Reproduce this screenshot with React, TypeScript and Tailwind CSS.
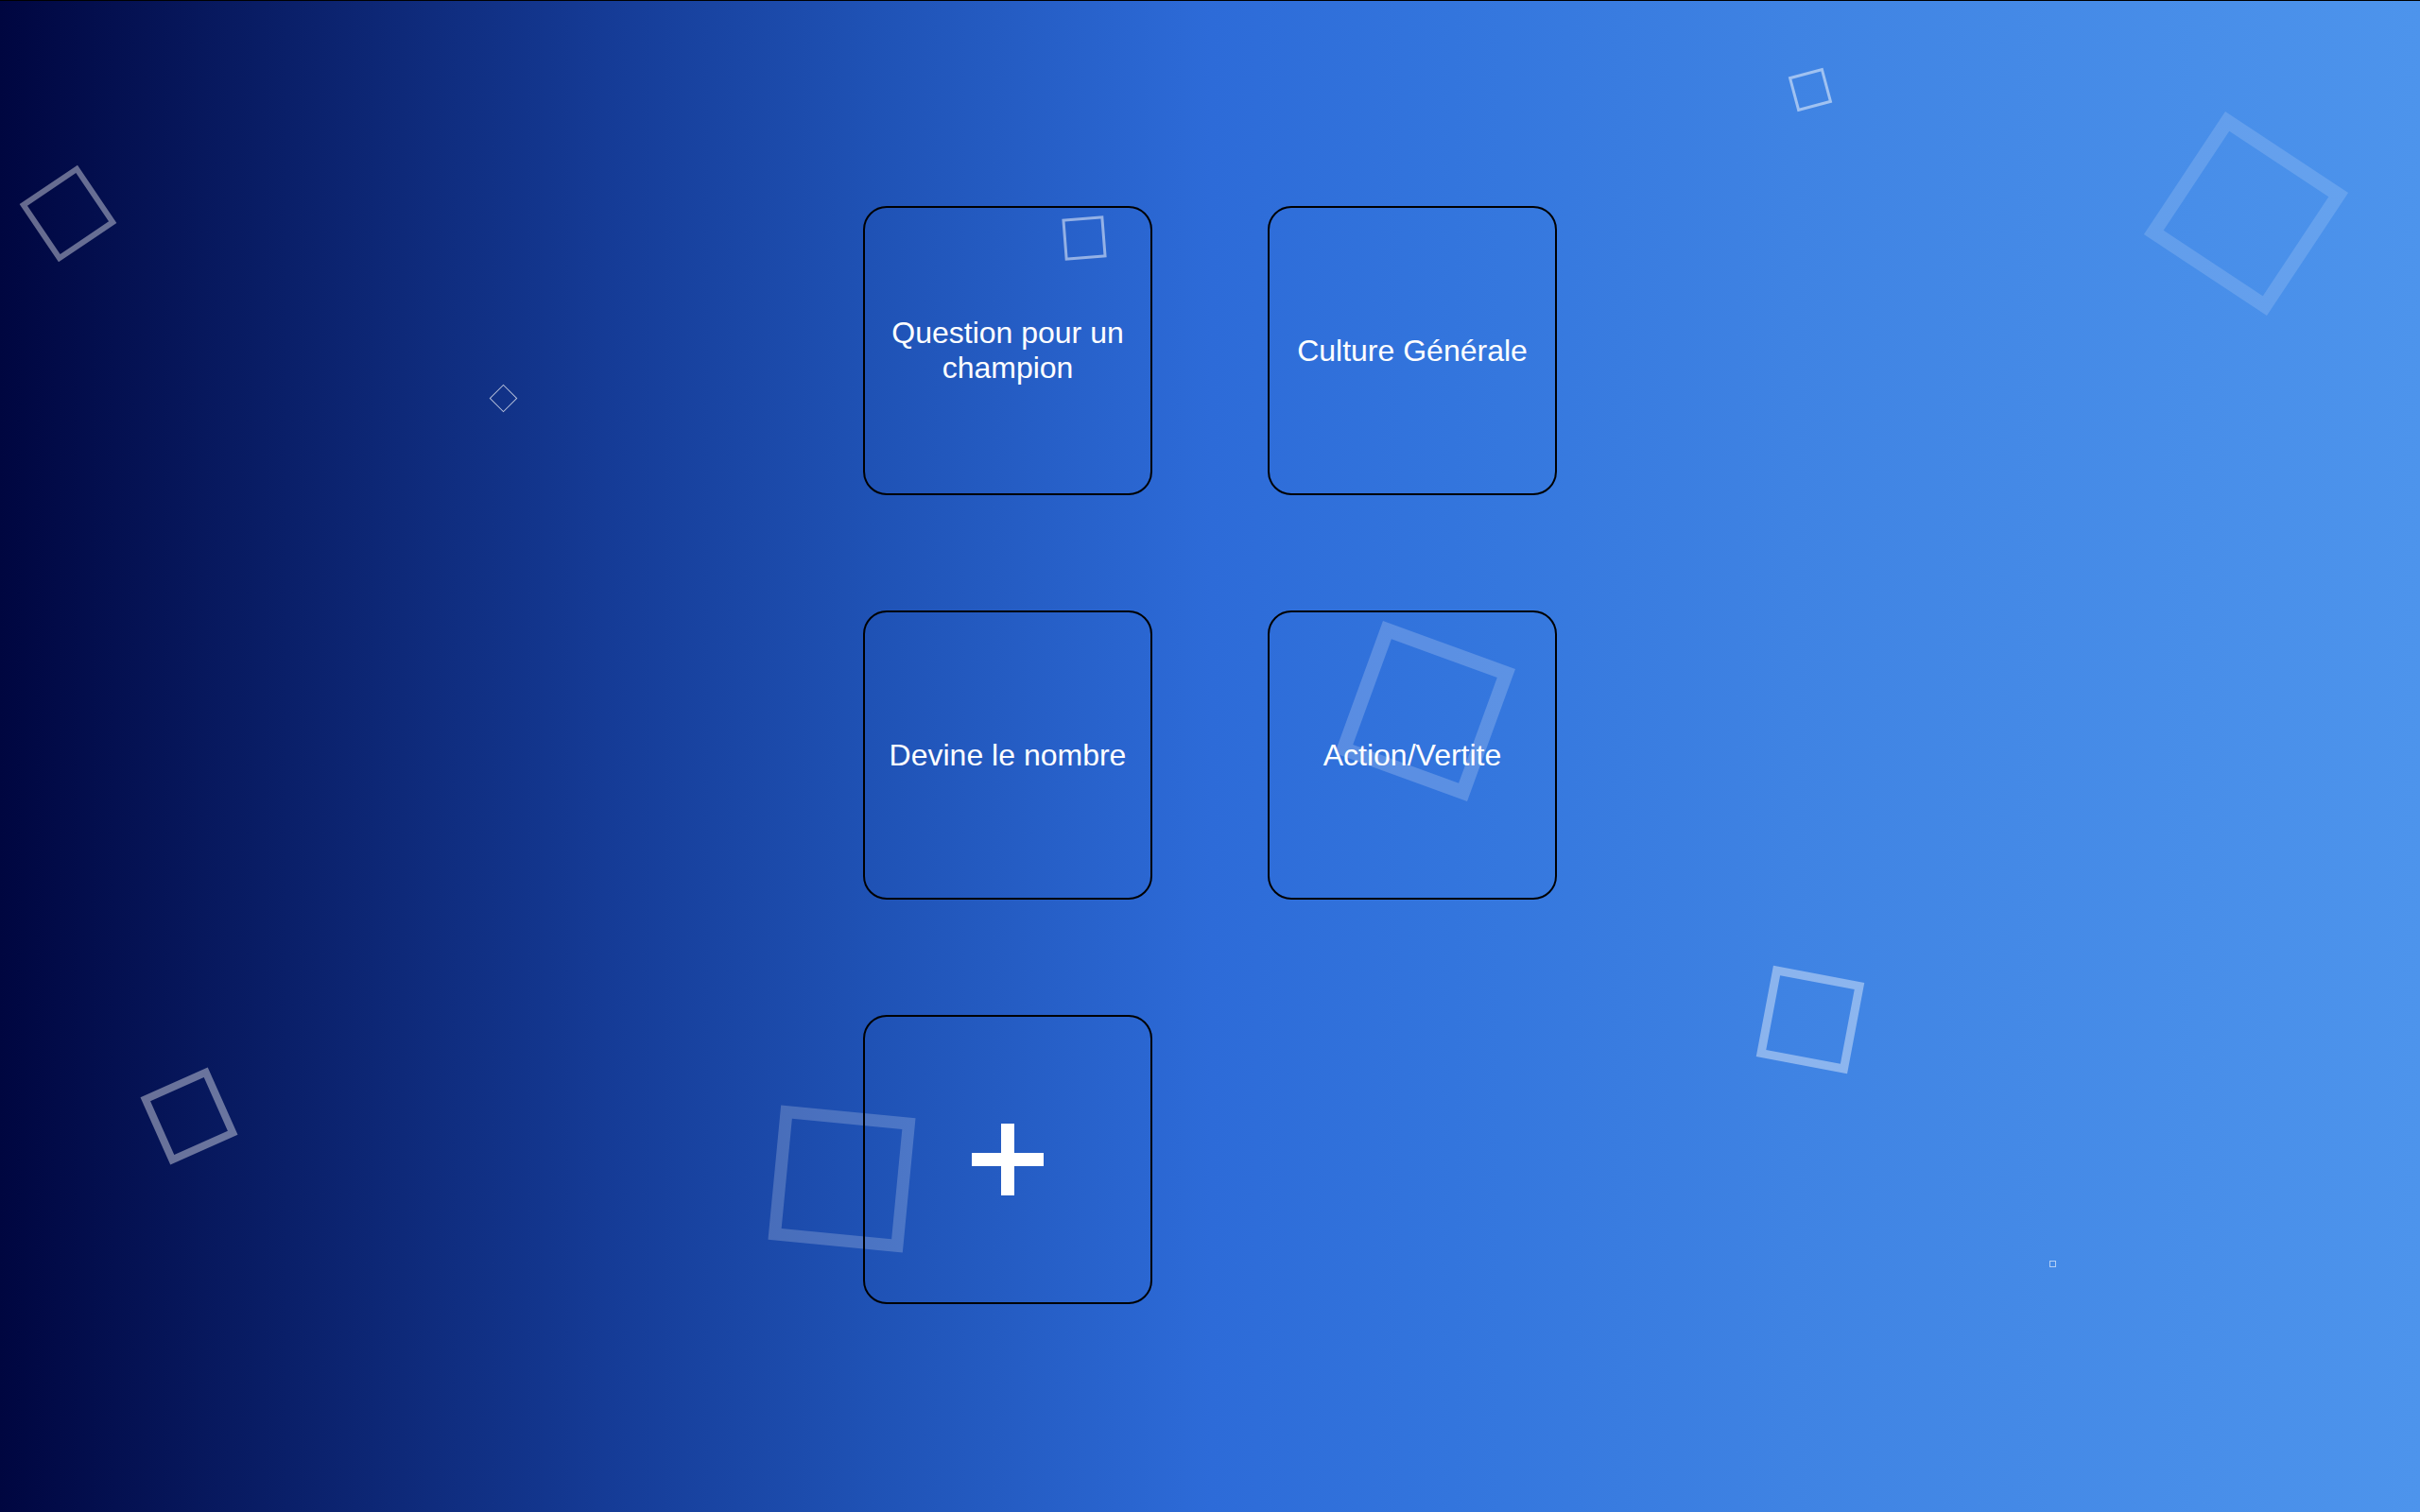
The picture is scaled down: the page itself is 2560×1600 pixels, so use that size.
import React from "react";

const cards = ["Question pour un champion", "Culture Générale", "Devine le nombre", "Action/Vertite"];

export default function App() {
  return (
    <div
      className="relative w-full h-[1600px] overflow-hidden border-t border-black bg-[linear-gradient(to_right,#000640_0%,#153b96_25%,#1f52b5_36%,#2d6bd8_50%,#3375dd_60%,#3f83e3_74%,#4d94ec_100%)]"
      style={{ fontFamily: '"Liberation Sans", Arial, sans-serif' }}
    >
      {/* decorative floating squares on the background canvas */}
      <div className="absolute left-[35px] top-[188px] w-[74px] h-[74px] rotate-[-34deg] border-[6px] border-white/40" />
      <div className="absolute left-[522px] top-[410px] w-[21px] h-[21px] rotate-[45deg] border-[1.5px] border-white/70" />
      <div className="absolute left-[161px] top-[1141px] w-[78px] h-[78px] rotate-[-24deg] border-[8px] border-white/40" />
      <div className="absolute left-[819px] top-[1175px] w-[143px] h-[143px] rotate-[5.5deg] border-[13px] border-white/20" />
      <div className="absolute left-[1125px] top-[229px] w-[44px] h-[44px] rotate-[-4.5deg] border-[3px] border-white/50" />
      <div className="absolute left-[1433px] top-[677px] w-[149px] h-[149px] rotate-[20deg] border-[15px] border-white/20" />
      <div className="absolute left-[1896px] top-[75px] w-[38px] h-[38px] rotate-[-15deg] border-[3px] border-white/50" />
      <div className="absolute left-[2298px] top-[147px] w-[156px] h-[156px] rotate-[33.5deg] border-[15px] border-white/15" />
      <div className="absolute left-[1866px] top-[1029px] w-[98px] h-[98px] rotate-[10.7deg] border-[9px] border-white/40" />
      <div className="absolute left-[2168px] top-[1333px] w-[7px] h-[7px] border border-white/60" />

      <div className="relative flex h-full w-full items-center justify-center pb-[3px]">
        <div className="grid grid-cols-[306px_306px] gap-[122px]">
          {cards.map((c) => (
            <div
              key={c}
              className="flex h-[306px] w-[306px] items-center justify-center rounded-[25px] border-2 border-black px-4 text-center text-[32px] leading-[1.15] text-white"
            >
              {c}
            </div>
          ))}
          <div className="flex h-[306px] w-[306px] items-center justify-center rounded-[25px] border-2 border-black">
            <svg width="76" height="76" viewBox="0 0 76 76" fill="#ffffff">
              <rect x="0" y="31" width="76" height="14" />
              <rect x="31" y="0" width="14" height="76" />
            </svg>
          </div>
        </div>
      </div>
    </div>
  );
}
